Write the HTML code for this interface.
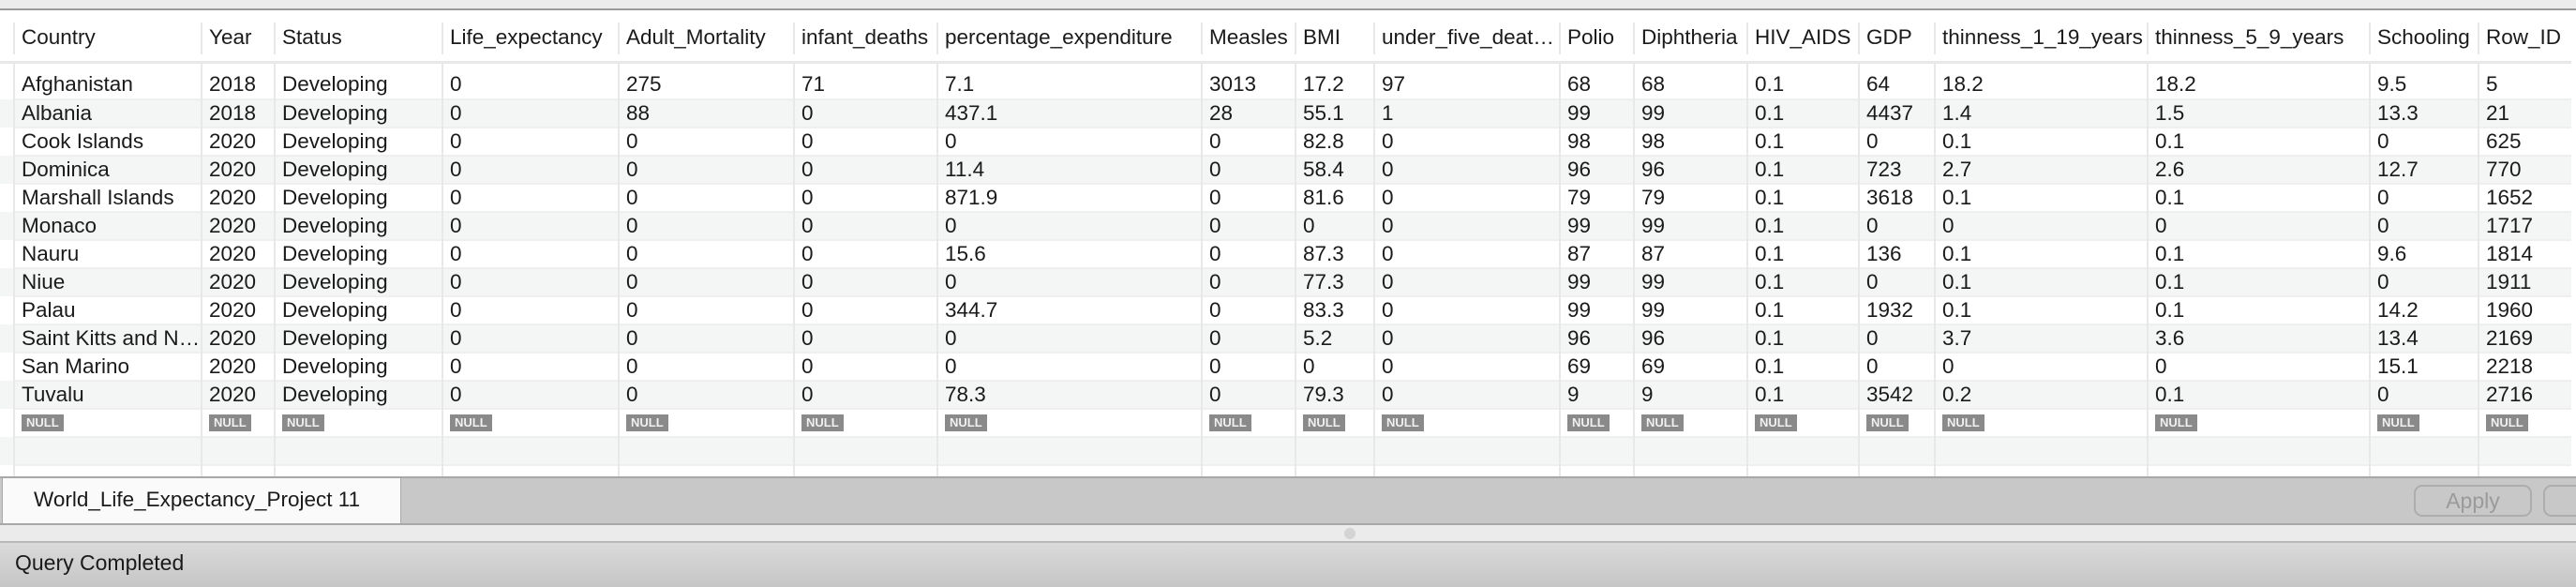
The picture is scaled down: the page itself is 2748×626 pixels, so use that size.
<!DOCTYPE html>
<html><head><meta charset="utf-8"><style>
*{margin:0;padding:0;box-sizing:border-box}
body{width:2748px;height:626px;overflow:hidden;background:#fff;font-family:"Liberation Sans",sans-serif;font-size:22.5px;color:#1a1a1a;position:relative}
.top{position:absolute;left:0;top:0;width:2748px;height:11px;background:#ececec;border-bottom:2px solid #9a9a9a}
.row{position:absolute;left:0;width:2743px;height:30px}
.cell{position:absolute;top:0;height:100%;line-height:30px;padding-left:7px;white-space:nowrap;overflow:hidden}
.sep{position:absolute;width:2px;background:#e8e8e8}
.null{display:inline-block;background:#8a8a8a;color:#f0f0f0;font-size:13px;font-weight:bold;line-height:18px;height:18px;padding:0 5px;vertical-align:middle;margin-top:-3px}
.tabbar{position:absolute;left:0;top:508px;width:2748px;height:52px;background:#c8c8c8;border-top:2px solid #a8a8a8;border-bottom:2px solid #a8a8a8}
.tab{position:absolute;left:2px;top:0;width:426px;height:48px;background:#fafafa;border-left:1px solid #aaa;border-right:1px solid #aaa;line-height:46px;padding-left:33px;font-size:22.5px}
.btn{position:absolute;top:7px;height:34px;border:2px solid #adadad;border-radius:9px;color:#9a9a9a;font-size:23px;line-height:30px;text-align:center}
.strip{position:absolute;left:0;top:560px;width:2748px;height:19px;background:#ebebeb;border-bottom:2px solid #b8b8b8}
.status{position:absolute;left:0;top:579px;width:2748px;height:47px;background:linear-gradient(#dadada,#c6c6c6);line-height:42px;padding-left:16px;font-size:23px}
</style></head><body>
<div class="top"></div>
<div id="grid"></div>
<div class="tabbar"><div class="tab">World_Life_Expectancy_Project 11</div>
<div class="btn" style="left:2575px;width:126px">Apply</div>
<div class="btn" style="left:2713px;width:60px"></div></div>
<div class="strip"><div style="position:absolute;left:1434px;top:3px;width:12px;height:12px;border-radius:6px;background:#d4d4d4"></div></div>
<div class="status">Query Completed</div>
<script>
var b=[16,216,294,473,661,848,1001,1283,1383,1467,1665,1744,1865,1984,2065,2292,2529,2645,2743];
var H=["Country","Year","Status","Life_expectancy","Adult_Mortality","infant_deaths","percentage_expenditure","Measles","BMI","under_five_deat…","Polio","Diphtheria","HIV_AIDS","GDP","thinness_1_19_years","thinness_5_9_years","Schooling","Row_ID"];
var R=[
"Afghanistan 2018 Developing 0 275 71 7.1 3013 17.2 97 68 68 0.1 64 18.2 18.2 9.5 5",
"Albania 2018 Developing 0 88 0 437.1 28 55.1 1 99 99 0.1 4437 1.4 1.5 13.3 21",
"Cook_Islands 2020 Developing 0 0 0 0 0 82.8 0 98 98 0.1 0 0.1 0.1 0 625",
"Dominica 2020 Developing 0 0 0 11.4 0 58.4 0 96 96 0.1 723 2.7 2.6 12.7 770",
"Marshall_Islands 2020 Developing 0 0 0 871.9 0 81.6 0 79 79 0.1 3618 0.1 0.1 0 1652",
"Monaco 2020 Developing 0 0 0 0 0 0 0 99 99 0.1 0 0 0 0 1717",
"Nauru 2020 Developing 0 0 0 15.6 0 87.3 0 87 87 0.1 136 0.1 0.1 9.6 1814",
"Niue 2020 Developing 0 0 0 0 0 77.3 0 99 99 0.1 0 0.1 0.1 0 1911",
"Palau 2020 Developing 0 0 0 344.7 0 83.3 0 99 99 0.1 1932 0.1 0.1 14.2 1960",
"Saint_Kitts_and_N… 2020 Developing 0 0 0 0 0 5.2 0 96 96 0.1 0 3.7 3.6 13.4 2169",
"San_Marino 2020 Developing 0 0 0 0 0 0 0 69 69 0.1 0 0 0 15.1 2218",
"Tuvalu 2020 Developing 0 0 0 78.3 0 79.3 0 9 9 0.1 3542 0.2 0.1 0 2716"];
var h="";
function row(top,ht,bg,vals,lh){
 var s='<div class="row" style="top:'+top+'px;height:'+ht+'px;background:'+bg+'">';
 for(var i=0;i<18;i++){s+='<div class="cell" style="left:'+b[i]+'px;width:'+(b[i+1]-b[i])+'px;line-height:'+lh+'px">'+(vals?vals[i]:'')+'</div>';}
 return s+'</div>';
}
h+=row(13,52,'#fff',H,54);
h+='<div style="position:absolute;left:0;top:65px;width:2743px;height:3px;background:#e8e8e8"></div>';
h+=row(68,38,'#fff',R[0].split(' ').map(function(x){return x.replace(/_/g,' ')}),44);
for(var r=1;r<12;r++){h+=row(106+(r-1)*30,30,r%2?'#f4f5f5':'#fff',R[r].split(' ').map(function(x){return x.replace(/_(?!\d)/g,' ')}),30);}
var n=[];for(var i=0;i<18;i++)n.push('<span class="null">NULL</span>');
h+=row(436,30,'#fff',n,30);
h+=row(466,30,'#f4f5f5',null,30);
h+=row(496,12,'#fff',null,30);
for(var r=0;r<14;r++){h+='<div style="position:absolute;left:16px;top:'+(105+r*30)+'px;width:2727px;height:2px;background:#efefef"></div>';}
for(var i=0;i<18;i++){h+='<div class="sep" style="left:'+(b[i]-2)+'px;top:24px;height:34px"></div><div class="sep" style="left:'+(b[i]-2)+'px;top:68px;height:440px"></div>';}
document.getElementById('grid').innerHTML=h;
</script>
</body></html>
